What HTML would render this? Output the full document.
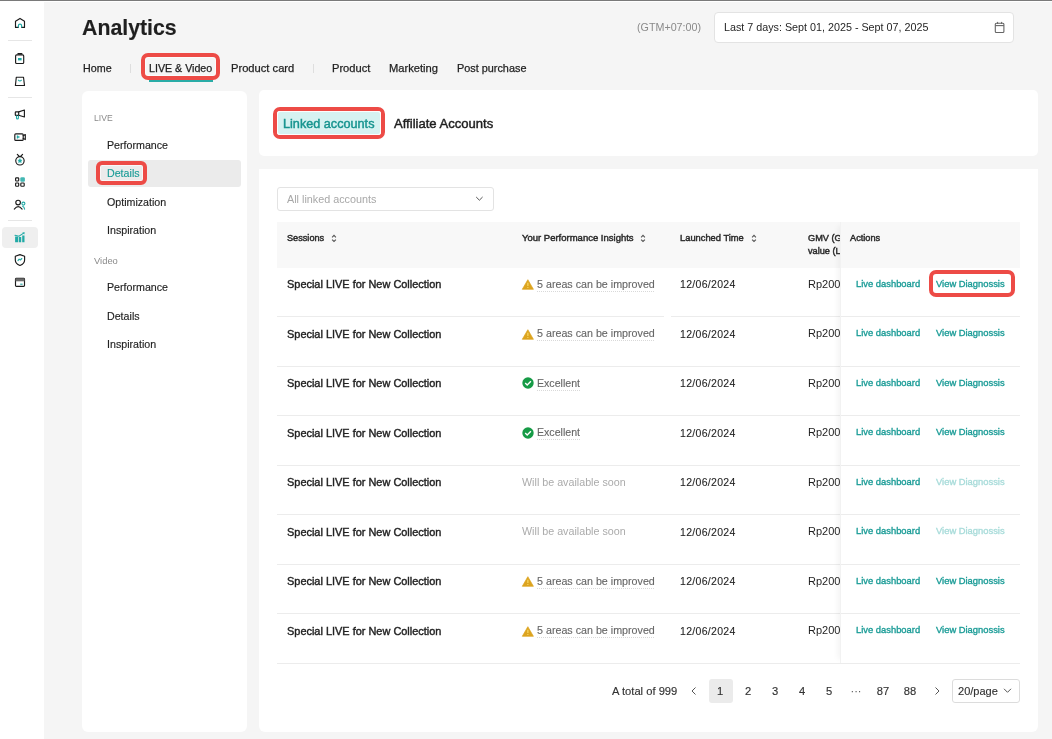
<!DOCTYPE html>
<html><head><meta charset="utf-8"><title>Analytics</title>
<style>
html,body{margin:0;padding:0}
body{width:1052px;height:739px;overflow:hidden;background:#f5f5f5;position:relative;font-family:"Liberation Sans",sans-serif;-webkit-font-smoothing:antialiased}
.t{will-change:transform}
.t{position:absolute;white-space:nowrap}
.r{position:absolute;box-sizing:content-box}
.ic{position:absolute;overflow:visible}
.clip{position:absolute;overflow:hidden}
</style></head><body>
<div class="r" style="left:0px;top:0px;width:1052px;height:1px;background:#7a7a7a"></div>
<div class="r" style="left:0px;top:1px;width:44px;height:738px;background:#fff"></div>
<div class="r" style="left:44px;top:1px;width:1008px;height:1px;background:#fff"></div>
<div class="r" style="left:8px;top:40px;width:24px;height:1px;background:#e6e6e6"></div>
<div class="r" style="left:8px;top:97px;width:24px;height:1px;background:#e6e6e6"></div>
<div class="r" style="left:8px;top:220px;width:24px;height:1px;background:#e6e6e6"></div>
<div class="r" style="left:2px;top:227px;width:36px;height:21px;background:#efefef;border-radius:4px"></div>
<svg class="ic" style="left:10px;top:14px" width="20" height="20" viewBox="0 0 20 20"><path d="M5.5 13.4V7.3L10 4.4L14.5 7.3V13.4H11.6M8.3 13.4H5.5" fill="none" stroke="#1c1c1c" stroke-width="1.15" stroke-linejoin="round" stroke-linecap="round"/><path d="M8.4 13.6V11.8A1.6 1.6 0 0 1 11.6 11.8V13.6" fill="none" stroke="#22aaa6" stroke-width="1.2"/></svg>
<svg class="ic" style="left:10px;top:49px" width="20" height="20" viewBox="0 0 20 20"><rect x="5.6" y="5.9" width="8.1" height="8.6" rx="1" fill="none" stroke="#1c1c1c" stroke-width="1.15" stroke-linejoin="round" stroke-linecap="round"/><path d="M8.1 4.8H11.7" stroke="#1c1c1c" stroke-width="1.6" stroke-linecap="round"/><rect x="8" y="9" width="3.6" height="2.4" fill="#22aaa6"/></svg>
<svg class="ic" style="left:10px;top:72px" width="20" height="20" viewBox="0 0 20 20"><path d="M6.3 5.2H13.5L14.5 13.5H5.4Z" fill="none" stroke="#1c1c1c" stroke-width="1.15" stroke-linejoin="round" stroke-linecap="round"/><path d="M8.2 7.9Q9.9 10.2 11.6 7.9" fill="none" stroke="#22aaa6" stroke-width="1.1"/></svg>
<svg class="ic" style="left:10px;top:105px" width="20" height="20" viewBox="0 0 20 20"><rect x="5.3" y="6.8" width="3.4" height="3.6" rx="0.6" fill="none" stroke="#1c1c1c" stroke-width="1.15" stroke-linejoin="round" stroke-linecap="round"/><path d="M8.7 6.9L14.4 5V12L8.7 10.3" fill="none" stroke="#1c1c1c" stroke-width="1.15" stroke-linejoin="round" stroke-linecap="round"/><path d="M6.5 10.6V12.9A0.95 0.95 0 0 0 8.4 12.9V10.6" fill="none" stroke="#22aaa6" stroke-width="1.1"/></svg>
<svg class="ic" style="left:10px;top:127px" width="20" height="20" viewBox="0 0 20 20"><rect x="4.8" y="6.8" width="8.4" height="6.6" rx="1" fill="none" stroke="#1c1c1c" stroke-width="1.15" stroke-linejoin="round" stroke-linecap="round"/><path d="M13.2 8.6L15.3 7.6V12.6L13.2 11.6" fill="none" stroke="#1c1c1c" stroke-width="1.15" stroke-linejoin="round" stroke-linecap="round"/><path d="M7 8.5V11.5L9.7 10Z" fill="#22aaa6" stroke="#22aaa6" stroke-width="0.4" stroke-linejoin="round"/></svg>
<svg class="ic" style="left:10px;top:150px" width="20" height="20" viewBox="0 0 20 20"><circle cx="9.95" cy="10.8" r="4.2" fill="none" stroke="#1c1c1c" stroke-width="1.15" stroke-linejoin="round" stroke-linecap="round"/><path d="M7.3 4.3L9.4 6.5M12.6 4.3L10.5 6.5" fill="none" stroke="#1c1c1c" stroke-width="1.15" stroke-linejoin="round" stroke-linecap="round"/><path d="M9.95 8.6L10.6 10L12.1 10.1L11 11.1L11.3 12.6L9.95 11.9L8.6 12.6L8.9 11.1L7.8 10.1L9.3 10Z" fill="#22aaa6" stroke="#22aaa6" stroke-width="0.5" stroke-linejoin="round"/></svg>
<svg class="ic" style="left:10px;top:172px" width="20" height="20" viewBox="0 0 20 20"><rect x="5.6" y="5.8" width="3.1" height="3.2" rx="0.8" fill="none" stroke="#1c1c1c" stroke-width="1.15" stroke-linejoin="round" stroke-linecap="round"/><rect x="5.6" y="11" width="3.1" height="3.2" rx="0.8" fill="none" stroke="#1c1c1c" stroke-width="1.15" stroke-linejoin="round" stroke-linecap="round"/><rect x="10.8" y="11" width="3.4" height="3.2" rx="0.8" fill="none" stroke="#1c1c1c" stroke-width="1.15" stroke-linejoin="round" stroke-linecap="round"/><rect x="10.3" y="5.3" width="4.6" height="4.4" rx="1.3" fill="#22aaa6" opacity="0.85"/></svg>
<svg class="ic" style="left:10px;top:195px" width="20" height="20" viewBox="0 0 20 20"><circle cx="8.1" cy="7.5" r="2.3" fill="none" stroke="#1c1c1c" stroke-width="1.15" stroke-linejoin="round" stroke-linecap="round"/><path d="M4.3 14.1Q8.2 9.2 12.1 14.1" fill="none" stroke="#1c1c1c" stroke-width="1.15" stroke-linejoin="round" stroke-linecap="round"/><circle cx="13.4" cy="8.6" r="1.5" fill="none" stroke="#22aaa6" stroke-width="1.1"/><path d="M12.6 11.2Q14.1 11.6 14.6 14.2" fill="none" stroke="#22aaa6" stroke-width="1.1" stroke-linecap="round"/></svg>
<svg class="ic" style="left:10px;top:227px" width="20" height="20" viewBox="0 0 20 20"><path d="M5.1 15.3H8.1V9.4H5.1ZM8.8 15.3H11.2V10H8.8ZM12.2 15.3H14.5V8.6H12.2Z" fill="#22aaa6"/><path d="M5 8.3L9 9.2L14 5.9" fill="none" stroke="#22aaa6" stroke-width="1.1" stroke-linecap="round"/><path d="M12.2 5.6L14.5 5.5L14.3 7.6Z" fill="#22aaa6"/></svg>
<svg class="ic" style="left:10px;top:250px" width="20" height="20" viewBox="0 0 20 20"><path d="M9.95 4.6L14.6 6.2V10Q14.6 13.8 9.95 15.5Q5.3 13.8 5.3 10V6.2Z" fill="none" stroke="#1c1c1c" stroke-width="1.15" stroke-linejoin="round" stroke-linecap="round"/><path d="M8 10.6L9.1 9.1L10.4 10L11.8 8.5" fill="none" stroke="#22aaa6" stroke-width="1.1" stroke-linecap="round" stroke-linejoin="round"/></svg>
<svg class="ic" style="left:10px;top:272px" width="20" height="20" viewBox="0 0 20 20"><rect x="5.5" y="6.3" width="9" height="8.1" rx="0.9" fill="none" stroke="#1c1c1c" stroke-width="1.15" stroke-linejoin="round" stroke-linecap="round"/><rect x="5.5" y="6.3" width="9" height="3" fill="#6a6a6a"/><path d="M10.2 12.2H12.6" stroke="#22aaa6" stroke-width="1.1"/></svg>
<div class="t" style="left:82.20px;top:18.17px;font-size:21.3px;line-height:21.3px;color:#1f1f1f;font-weight:700;-webkit-text-stroke:0.15px #1f1f1f;">Analytics</div>
<div class="t" style="left:637.20px;top:22.13px;font-size:10.72px;line-height:10.72px;color:#8a8a8a;font-weight:400;">(GTM+07:00)</div>
<div class="r" style="left:714px;top:12px;width:298px;height:29px;background:#fff;border:1px solid #e3e3e3;border-radius:4px"></div>
<div class="t" style="left:723.50px;top:22.10px;font-size:10.75px;line-height:10.75px;color:#262626;font-weight:400;">Last 7 days: Sept 01, 2025 - Sept 07, 2025</div>
<svg class="ic" style="left:993px;top:21px" width="13" height="13" viewBox="0 0 13 13"><rect x="2.3" y="2.3" width="8.6" height="9.2" rx="1" fill="none" stroke="#666" stroke-width="1.1"/><path d="M2.3 4.6H10.9" stroke="#666" stroke-width="1.1"/><path d="M4.6 0.9V3M8.6 0.9V3" stroke="#666" stroke-width="1"/></svg>
<div class="t" style="left:82.60px;top:62.93px;font-size:10.72px;line-height:10.72px;color:#1f1f1f;font-weight:400;-webkit-text-stroke:0.25px #1f1f1f;">Home</div>
<div class="r" style="left:130px;top:64px;width:1px;height:9px;background:#dedede"></div>
<div class="t" style="left:149.00px;top:62.97px;font-size:10.67px;line-height:10.67px;color:#1f1f1f;font-weight:400;-webkit-text-stroke:0.25px #1f1f1f;">LIVE &amp; Video</div>
<div class="r" style="left:149px;top:80px;width:64px;height:2px;background:#2aaca7"></div>
<div class="r" style="left:141px;top:53px;width:71px;height:19px;border:4px solid #ed4b46;border-radius:7px;box-shadow:inset 0 0 0 1px rgba(255,255,255,0.6)"></div>
<div class="t" style="left:231.00px;top:62.54px;font-size:11.17px;line-height:11.17px;color:#1f1f1f;font-weight:400;-webkit-text-stroke:0.25px #1f1f1f;">Product card</div>
<div class="r" style="left:313px;top:64px;width:1px;height:9px;background:#dedede"></div>
<div class="t" style="left:331.70px;top:62.60px;font-size:11.11px;line-height:11.11px;color:#1f1f1f;font-weight:400;-webkit-text-stroke:0.25px #1f1f1f;">Product</div>
<div class="t" style="left:388.80px;top:62.55px;font-size:11.16px;line-height:11.16px;color:#1f1f1f;font-weight:400;-webkit-text-stroke:0.25px #1f1f1f;">Marketing</div>
<div class="t" style="left:457.00px;top:62.80px;font-size:10.87px;line-height:10.87px;color:#1f1f1f;font-weight:400;-webkit-text-stroke:0.25px #1f1f1f;">Post purchase</div>
<div class="r" style="left:82px;top:90.5px;width:165px;height:641px;background:#fff;border-radius:6px"></div>
<div class="t" style="left:93.60px;top:114.32px;font-size:8.6px;line-height:8.6px;color:#8a8a8a;font-weight:400;">LIVE</div>
<div class="r" style="left:88px;top:159.5px;width:153px;height:27px;background:#ebebeb;border-radius:3px"></div>
<div class="r" style="left:96px;top:161px;width:43px;height:16px;border:4px solid #ed4b46;border-radius:6px;box-shadow:inset 0 0 0 1px rgba(255,255,255,0.6)"></div>
<div class="t" style="left:106.50px;top:139.67px;font-size:10.67px;line-height:10.67px;color:#1f1f1f;font-weight:400;-webkit-text-stroke:0.15px #1f1f1f;">Performance</div>
<div class="t" style="left:106.50px;top:167.97px;font-size:10.67px;line-height:10.67px;color:#1b9c97;font-weight:400;-webkit-text-stroke:0.15px #1b9c97;">Details</div>
<div class="t" style="left:106.50px;top:196.97px;font-size:10.67px;line-height:10.67px;color:#1f1f1f;font-weight:400;-webkit-text-stroke:0.15px #1f1f1f;">Optimization</div>
<div class="t" style="left:106.50px;top:225.37px;font-size:10.67px;line-height:10.67px;color:#1f1f1f;font-weight:400;-webkit-text-stroke:0.15px #1f1f1f;">Inspiration</div>
<div class="t" style="left:94.40px;top:256.14px;font-size:9.4px;line-height:9.4px;color:#8a8a8a;font-weight:400;">Video</div>
<div class="t" style="left:106.50px;top:282.27px;font-size:10.67px;line-height:10.67px;color:#1f1f1f;font-weight:400;-webkit-text-stroke:0.15px #1f1f1f;">Performance</div>
<div class="t" style="left:106.50px;top:310.97px;font-size:10.67px;line-height:10.67px;color:#1f1f1f;font-weight:400;-webkit-text-stroke:0.15px #1f1f1f;">Details</div>
<div class="t" style="left:106.50px;top:339.37px;font-size:10.67px;line-height:10.67px;color:#1f1f1f;font-weight:400;-webkit-text-stroke:0.15px #1f1f1f;">Inspiration</div>
<div class="r" style="left:259px;top:90px;width:779px;height:66.4px;background:#fff;border-radius:5px"></div>
<div class="r" style="left:273px;top:107px;width:104px;height:24px;border:4px solid #ed4b46;border-radius:7px"></div>
<div class="r" style="left:277px;top:111px;width:104px;height:24px;background:#d6f2f1;border-radius:3px;box-shadow:inset 0 0 0 1px #fdfdfd"></div>
<div class="t" style="left:283.00px;top:117.78px;font-size:12.66px;line-height:12.66px;color:#17948f;font-weight:400;-webkit-text-stroke:0.45px #17948f;">Linked accounts</div>
<div class="t" style="left:394.00px;top:117.44px;font-size:13.07px;line-height:13.07px;color:#1f1f1f;font-weight:400;-webkit-text-stroke:0.45px #1f1f1f;">Affiliate Accounts</div>
<div class="r" style="left:259px;top:169px;width:779px;height:562.5px;background:#fff;border-radius:0 0 6px 6px"></div>
<div class="r" style="left:277px;top:187px;width:215px;height:22px;background:#fff;border:1px solid #e3e3e3;border-radius:3px"></div>
<div class="t" style="left:286.70px;top:193.66px;font-size:10.8px;line-height:10.8px;color:#a8a8a8;font-weight:400;">All linked accounts</div>
<svg class="ic" style="left:474px;top:194px" width="10" height="8" viewBox="0 0 10 8"><path d="M2.2 3L5.4 6.2L8.6 3" fill="none" stroke="#555" stroke-width="1"/></svg>
<div class="r" style="left:277px;top:222px;width:743px;height:46px;background:#f8f8f8"></div>
<div class="t" style="left:286.70px;top:233.75px;font-size:9.16px;line-height:9.16px;color:#2a2a2a;font-weight:400;-webkit-text-stroke:0.45px #2a2a2a;">Sessions</div>
<svg class="ic" style="left:330.5px;top:234px" width="6" height="9" viewBox="0 0 6 9"><path d="M1.1 3.3L3 1.4L4.9 3.3M1.1 5.6L3 7.5L4.9 5.6" fill="none" stroke="#555" stroke-width="1.15"/></svg>
<div class="t" style="left:522.00px;top:233.46px;font-size:9.5px;line-height:9.5px;color:#2a2a2a;font-weight:400;-webkit-text-stroke:0.45px #2a2a2a;">Your Performance Insights</div>
<svg class="ic" style="left:640px;top:234px" width="6" height="9" viewBox="0 0 6 9"><path d="M1.1 3.3L3 1.4L4.9 3.3M1.1 5.6L3 7.5L4.9 5.6" fill="none" stroke="#555" stroke-width="1.15"/></svg>
<div class="t" style="left:680.30px;top:233.59px;font-size:9.34px;line-height:9.34px;color:#2a2a2a;font-weight:400;-webkit-text-stroke:0.45px #2a2a2a;">Launched Time</div>
<svg class="ic" style="left:750.5px;top:234px" width="6" height="9" viewBox="0 0 6 9"><path d="M1.1 3.3L3 1.4L4.9 3.3M1.1 5.6L3 7.5L4.9 5.6" fill="none" stroke="#555" stroke-width="1.15"/></svg>
<div class="r" style="left:277px;top:316px;width:743px;height:1px;background:#ececec"></div>
<div class="r" style="left:664px;top:316px;width:7px;height:1px;background:#fff"></div>
<div class="t" style="left:286.70px;top:279.34px;font-size:10.94px;line-height:10.94px;color:#1f1f1f;font-weight:400;-webkit-text-stroke:0.4px #1f1f1f;">Special LIVE for New Collection</div>
<svg class="ic" style="left:522px;top:279.2px" width="12" height="11" viewBox="0 0 12 11"><path d="M5.85 0.7L11.4 10.3H0.3Z" fill="#dca41f" stroke="#dca41f" stroke-width="0.7" stroke-linejoin="round"/><path d="M5.85 3.8V6.9" stroke="#f6d35e" stroke-width="1.3"/><path d="M5.85 8.1V9.1" stroke="#f6d35e" stroke-width="1.2"/></svg>
<div class="t" style="left:537.20px;top:278.73px;font-size:10.71px;line-height:10.71px;color:#666;font-weight:400;-webkit-text-stroke:0.12px #666;">5 areas can be improved</div>
<div class="r" style="left:537px;top:291px;width:118px;height:1px;background:linear-gradient(to right,#d9d9d9 50%,transparent 50%);background-size:2px 1px"></div>
<div class="t" style="left:680.30px;top:279.11px;font-size:10.5px;line-height:10.5px;color:#1f1f1f;font-weight:400;-webkit-text-stroke:0.1px #1f1f1f;letter-spacing:0.3px">12/06/2024</div>
<div class="clip" style="left:807px;top:267.0px;width:33px;height:48px"><div class="t" style="left:0.70px;top:11.89px;font-size:11px;line-height:11px;color:#1f1f1f;font-weight:400;">Rp200,000</div>
</div>
<div class="r" style="left:277px;top:366px;width:743px;height:1px;background:#ececec"></div>
<div class="t" style="left:286.70px;top:328.84px;font-size:10.94px;line-height:10.94px;color:#1f1f1f;font-weight:400;-webkit-text-stroke:0.4px #1f1f1f;">Special LIVE for New Collection</div>
<svg class="ic" style="left:522px;top:328.7px" width="12" height="11" viewBox="0 0 12 11"><path d="M5.85 0.7L11.4 10.3H0.3Z" fill="#dca41f" stroke="#dca41f" stroke-width="0.7" stroke-linejoin="round"/><path d="M5.85 3.8V6.9" stroke="#f6d35e" stroke-width="1.3"/><path d="M5.85 8.1V9.1" stroke="#f6d35e" stroke-width="1.2"/></svg>
<div class="t" style="left:537.20px;top:328.23px;font-size:10.71px;line-height:10.71px;color:#666;font-weight:400;-webkit-text-stroke:0.12px #666;">5 areas can be improved</div>
<div class="r" style="left:537px;top:340px;width:118px;height:1px;background:linear-gradient(to right,#d9d9d9 50%,transparent 50%);background-size:2px 1px"></div>
<div class="t" style="left:680.30px;top:328.61px;font-size:10.5px;line-height:10.5px;color:#1f1f1f;font-weight:400;-webkit-text-stroke:0.1px #1f1f1f;letter-spacing:0.3px">12/06/2024</div>
<div class="clip" style="left:807px;top:316.5px;width:33px;height:48px"><div class="t" style="left:0.70px;top:11.89px;font-size:11px;line-height:11px;color:#1f1f1f;font-weight:400;">Rp200,000</div>
</div>
<div class="r" style="left:277px;top:415px;width:743px;height:1px;background:#ececec"></div>
<div class="t" style="left:286.70px;top:378.34px;font-size:10.94px;line-height:10.94px;color:#1f1f1f;font-weight:400;-webkit-text-stroke:0.4px #1f1f1f;">Special LIVE for New Collection</div>
<svg class="ic" style="left:522px;top:377.1px" width="12" height="12" viewBox="0 0 12 12"><circle cx="6" cy="6" r="5.7" fill="#169b46"/><path d="M3.2 6.1L5.2 8L8.9 4.2" fill="none" stroke="#fff" stroke-width="1.4"/></svg>
<div class="t" style="left:537.20px;top:377.83px;font-size:10.6px;line-height:10.6px;color:#666;font-weight:400;-webkit-text-stroke:0.12px #666;">Excellent</div>
<div class="r" style="left:537px;top:390px;width:43px;height:1px;background:linear-gradient(to right,#d9d9d9 50%,transparent 50%);background-size:2px 1px"></div>
<div class="t" style="left:680.30px;top:378.11px;font-size:10.5px;line-height:10.5px;color:#1f1f1f;font-weight:400;-webkit-text-stroke:0.1px #1f1f1f;letter-spacing:0.3px">12/06/2024</div>
<div class="clip" style="left:807px;top:366.0px;width:33px;height:48px"><div class="t" style="left:0.70px;top:11.89px;font-size:11px;line-height:11px;color:#1f1f1f;font-weight:400;">Rp200,000</div>
</div>
<div class="r" style="left:277px;top:465px;width:743px;height:1px;background:#ececec"></div>
<div class="t" style="left:286.70px;top:427.84px;font-size:10.94px;line-height:10.94px;color:#1f1f1f;font-weight:400;-webkit-text-stroke:0.4px #1f1f1f;">Special LIVE for New Collection</div>
<svg class="ic" style="left:522px;top:426.6px" width="12" height="12" viewBox="0 0 12 12"><circle cx="6" cy="6" r="5.7" fill="#169b46"/><path d="M3.2 6.1L5.2 8L8.9 4.2" fill="none" stroke="#fff" stroke-width="1.4"/></svg>
<div class="t" style="left:537.20px;top:427.33px;font-size:10.6px;line-height:10.6px;color:#666;font-weight:400;-webkit-text-stroke:0.12px #666;">Excellent</div>
<div class="r" style="left:537px;top:439px;width:43px;height:1px;background:linear-gradient(to right,#d9d9d9 50%,transparent 50%);background-size:2px 1px"></div>
<div class="t" style="left:680.30px;top:427.61px;font-size:10.5px;line-height:10.5px;color:#1f1f1f;font-weight:400;-webkit-text-stroke:0.1px #1f1f1f;letter-spacing:0.3px">12/06/2024</div>
<div class="clip" style="left:807px;top:415.5px;width:33px;height:48px"><div class="t" style="left:0.70px;top:11.89px;font-size:11px;line-height:11px;color:#1f1f1f;font-weight:400;">Rp200,000</div>
</div>
<div class="r" style="left:277px;top:514px;width:743px;height:1px;background:#ececec"></div>
<div class="t" style="left:286.70px;top:477.34px;font-size:10.94px;line-height:10.94px;color:#1f1f1f;font-weight:400;-webkit-text-stroke:0.4px #1f1f1f;">Special LIVE for New Collection</div>
<div class="t" style="left:522.40px;top:476.92px;font-size:10.73px;line-height:10.73px;color:#ababab;font-weight:400;">Will be available soon</div>
<div class="t" style="left:680.30px;top:477.11px;font-size:10.5px;line-height:10.5px;color:#1f1f1f;font-weight:400;-webkit-text-stroke:0.1px #1f1f1f;letter-spacing:0.3px">12/06/2024</div>
<div class="clip" style="left:807px;top:465.0px;width:33px;height:48px"><div class="t" style="left:0.70px;top:11.89px;font-size:11px;line-height:11px;color:#1f1f1f;font-weight:400;">Rp200,000</div>
</div>
<div class="r" style="left:277px;top:564px;width:743px;height:1px;background:#ececec"></div>
<div class="t" style="left:286.70px;top:526.84px;font-size:10.94px;line-height:10.94px;color:#1f1f1f;font-weight:400;-webkit-text-stroke:0.4px #1f1f1f;">Special LIVE for New Collection</div>
<div class="t" style="left:522.40px;top:526.42px;font-size:10.73px;line-height:10.73px;color:#ababab;font-weight:400;">Will be available soon</div>
<div class="t" style="left:680.30px;top:526.61px;font-size:10.5px;line-height:10.5px;color:#1f1f1f;font-weight:400;-webkit-text-stroke:0.1px #1f1f1f;letter-spacing:0.3px">12/06/2024</div>
<div class="clip" style="left:807px;top:514.5px;width:33px;height:48px"><div class="t" style="left:0.70px;top:11.89px;font-size:11px;line-height:11px;color:#1f1f1f;font-weight:400;">Rp200,000</div>
</div>
<div class="r" style="left:277px;top:613px;width:743px;height:1px;background:#ececec"></div>
<div class="t" style="left:286.70px;top:576.34px;font-size:10.94px;line-height:10.94px;color:#1f1f1f;font-weight:400;-webkit-text-stroke:0.4px #1f1f1f;">Special LIVE for New Collection</div>
<svg class="ic" style="left:522px;top:576.2px" width="12" height="11" viewBox="0 0 12 11"><path d="M5.85 0.7L11.4 10.3H0.3Z" fill="#dca41f" stroke="#dca41f" stroke-width="0.7" stroke-linejoin="round"/><path d="M5.85 3.8V6.9" stroke="#f6d35e" stroke-width="1.3"/><path d="M5.85 8.1V9.1" stroke="#f6d35e" stroke-width="1.2"/></svg>
<div class="t" style="left:537.20px;top:575.73px;font-size:10.71px;line-height:10.71px;color:#666;font-weight:400;-webkit-text-stroke:0.12px #666;">5 areas can be improved</div>
<div class="r" style="left:537px;top:588px;width:118px;height:1px;background:linear-gradient(to right,#d9d9d9 50%,transparent 50%);background-size:2px 1px"></div>
<div class="t" style="left:680.30px;top:576.11px;font-size:10.5px;line-height:10.5px;color:#1f1f1f;font-weight:400;-webkit-text-stroke:0.1px #1f1f1f;letter-spacing:0.3px">12/06/2024</div>
<div class="clip" style="left:807px;top:564.0px;width:33px;height:48px"><div class="t" style="left:0.70px;top:11.89px;font-size:11px;line-height:11px;color:#1f1f1f;font-weight:400;">Rp200,000</div>
</div>
<div class="r" style="left:277px;top:663px;width:743px;height:1px;background:#ececec"></div>
<div class="t" style="left:286.70px;top:625.84px;font-size:10.94px;line-height:10.94px;color:#1f1f1f;font-weight:400;-webkit-text-stroke:0.4px #1f1f1f;">Special LIVE for New Collection</div>
<svg class="ic" style="left:522px;top:625.7px" width="12" height="11" viewBox="0 0 12 11"><path d="M5.85 0.7L11.4 10.3H0.3Z" fill="#dca41f" stroke="#dca41f" stroke-width="0.7" stroke-linejoin="round"/><path d="M5.85 3.8V6.9" stroke="#f6d35e" stroke-width="1.3"/><path d="M5.85 8.1V9.1" stroke="#f6d35e" stroke-width="1.2"/></svg>
<div class="t" style="left:537.20px;top:625.23px;font-size:10.71px;line-height:10.71px;color:#666;font-weight:400;-webkit-text-stroke:0.12px #666;">5 areas can be improved</div>
<div class="r" style="left:537px;top:637px;width:118px;height:1px;background:linear-gradient(to right,#d9d9d9 50%,transparent 50%);background-size:2px 1px"></div>
<div class="t" style="left:680.30px;top:625.61px;font-size:10.5px;line-height:10.5px;color:#1f1f1f;font-weight:400;-webkit-text-stroke:0.1px #1f1f1f;letter-spacing:0.3px">12/06/2024</div>
<div class="clip" style="left:807px;top:613.5px;width:33px;height:48px"><div class="t" style="left:0.70px;top:11.89px;font-size:11px;line-height:11px;color:#1f1f1f;font-weight:400;">Rp200,000</div>
</div>
<div class="clip" style="left:807px;top:222px;width:33px;height:44px"><div class="t" style="left:0.70px;top:11.71px;font-size:9.2px;line-height:9.2px;color:#2a2a2a;font-weight:400;-webkit-text-stroke:0.45px #2a2a2a;">GMV (Gross merchandise</div>
<div class="t" style="left:0.70px;top:25.01px;font-size:9.2px;line-height:9.2px;color:#2a2a2a;font-weight:400;-webkit-text-stroke:0.45px #2a2a2a;">value (LIVE)</div>
</div>
<div class="r" style="left:840px;top:222px;width:180px;height:441px;background:transparent;box-shadow:-6px 0 6px -4px rgba(0,0,0,0.05);border-left:1px solid #f2f2f2"></div>
<div class="r" style="left:841px;top:222px;width:179px;height:46px;background:#f8f8f8"></div>
<div class="t" style="left:849.70px;top:233.71px;font-size:9.2px;line-height:9.2px;color:#2a2a2a;font-weight:400;-webkit-text-stroke:0.45px #2a2a2a;">Actions</div>
<div class="t" style="left:855.90px;top:279.86px;font-size:9.38px;line-height:9.38px;color:#1b9c97;font-weight:400;-webkit-text-stroke:0.35px #1b9c97;">Live dashboard</div>
<div class="t" style="left:935.70px;top:279.86px;font-size:9.38px;line-height:9.38px;color:#1b9c97;font-weight:400;-webkit-text-stroke:0.35px #1b9c97;">View Diagnossis</div>
<div class="t" style="left:855.90px;top:329.36px;font-size:9.38px;line-height:9.38px;color:#1b9c97;font-weight:400;-webkit-text-stroke:0.35px #1b9c97;">Live dashboard</div>
<div class="t" style="left:935.70px;top:329.36px;font-size:9.38px;line-height:9.38px;color:#1b9c97;font-weight:400;-webkit-text-stroke:0.35px #1b9c97;">View Diagnossis</div>
<div class="t" style="left:855.90px;top:378.86px;font-size:9.38px;line-height:9.38px;color:#1b9c97;font-weight:400;-webkit-text-stroke:0.35px #1b9c97;">Live dashboard</div>
<div class="t" style="left:935.70px;top:378.86px;font-size:9.38px;line-height:9.38px;color:#1b9c97;font-weight:400;-webkit-text-stroke:0.35px #1b9c97;">View Diagnossis</div>
<div class="t" style="left:855.90px;top:428.36px;font-size:9.38px;line-height:9.38px;color:#1b9c97;font-weight:400;-webkit-text-stroke:0.35px #1b9c97;">Live dashboard</div>
<div class="t" style="left:935.70px;top:428.36px;font-size:9.38px;line-height:9.38px;color:#1b9c97;font-weight:400;-webkit-text-stroke:0.35px #1b9c97;">View Diagnossis</div>
<div class="t" style="left:855.90px;top:477.86px;font-size:9.38px;line-height:9.38px;color:#1b9c97;font-weight:400;-webkit-text-stroke:0.35px #1b9c97;">Live dashboard</div>
<div class="t" style="left:935.70px;top:477.86px;font-size:9.38px;line-height:9.38px;color:#a9dcda;font-weight:400;-webkit-text-stroke:0.35px #a9dcda;">View Diagnossis</div>
<div class="t" style="left:855.90px;top:527.36px;font-size:9.38px;line-height:9.38px;color:#1b9c97;font-weight:400;-webkit-text-stroke:0.35px #1b9c97;">Live dashboard</div>
<div class="t" style="left:935.70px;top:527.36px;font-size:9.38px;line-height:9.38px;color:#a9dcda;font-weight:400;-webkit-text-stroke:0.35px #a9dcda;">View Diagnossis</div>
<div class="t" style="left:855.90px;top:576.86px;font-size:9.38px;line-height:9.38px;color:#1b9c97;font-weight:400;-webkit-text-stroke:0.35px #1b9c97;">Live dashboard</div>
<div class="t" style="left:935.70px;top:576.86px;font-size:9.38px;line-height:9.38px;color:#1b9c97;font-weight:400;-webkit-text-stroke:0.35px #1b9c97;">View Diagnossis</div>
<div class="t" style="left:855.90px;top:626.36px;font-size:9.38px;line-height:9.38px;color:#1b9c97;font-weight:400;-webkit-text-stroke:0.35px #1b9c97;">Live dashboard</div>
<div class="t" style="left:935.70px;top:626.36px;font-size:9.38px;line-height:9.38px;color:#1b9c97;font-weight:400;-webkit-text-stroke:0.35px #1b9c97;">View Diagnossis</div>
<div class="r" style="left:929px;top:270px;width:78px;height:19px;border:4px solid #ed4b46;border-radius:7px"></div>
<div class="t" style="left:612.40px;top:685.92px;font-size:11.2px;line-height:11.2px;color:#333;font-weight:400;-webkit-text-stroke:0.15px #333;">A total of 999</div>
<svg class="ic" style="left:690px;top:686px" width="8" height="10" viewBox="0 0 8 10"><path d="M5.5 1.5L2 5L5.5 8.5" fill="none" stroke="#555" stroke-width="1"/></svg>
<div class="r" style="left:709px;top:679px;width:24px;height:24px;background:#ebebeb;border-radius:3px"></div>
<div class="t" style="left:705.3px;top:686.0885px;width:30px;text-align:center;font-size:11.2px;line-height:11px;color:#333;-webkit-text-stroke:0.15px #333">1</div>
<div class="t" style="left:733px;top:686.0885px;width:30px;text-align:center;font-size:11.2px;line-height:11px;color:#333;-webkit-text-stroke:0.15px #333">2</div>
<div class="t" style="left:759.9px;top:686.0885px;width:30px;text-align:center;font-size:11.2px;line-height:11px;color:#333;-webkit-text-stroke:0.15px #333">3</div>
<div class="t" style="left:786.8px;top:686.0885px;width:30px;text-align:center;font-size:11.2px;line-height:11px;color:#333;-webkit-text-stroke:0.15px #333">4</div>
<div class="t" style="left:814px;top:686.0885px;width:30px;text-align:center;font-size:11.2px;line-height:11px;color:#333;-webkit-text-stroke:0.15px #333">5</div>
<div class="t" style="left:868.1px;top:686.0885px;width:30px;text-align:center;font-size:11.2px;line-height:11px;color:#333;-webkit-text-stroke:0.15px #333">87</div>
<div class="t" style="left:895px;top:686.0885px;width:30px;text-align:center;font-size:11.2px;line-height:11px;color:#333;-webkit-text-stroke:0.15px #333">88</div>
<div class="t" style="left:841px;top:686.0885px;width:30px;text-align:center;font-size:11px;line-height:11px;color:#555">···</div>
<svg class="ic" style="left:933px;top:686px" width="8" height="10" viewBox="0 0 8 10"><path d="M2.5 1.5L6 5L2.5 8.5" fill="none" stroke="#555" stroke-width="1"/></svg>
<div class="r" style="left:952px;top:679px;width:66px;height:22px;background:#fff;border:1px solid #dcdcdc;border-radius:3px"></div>
<div class="t" style="left:958.30px;top:686.05px;font-size:11.04px;line-height:11.04px;color:#333;font-weight:400;-webkit-text-stroke:0.15px #333;">20/page</div>
<svg class="ic" style="left:1003px;top:687px" width="9" height="7" viewBox="0 0 9 7"><path d="M1 1.8L4.5 5.3L8 1.8" fill="none" stroke="#555" stroke-width="1"/></svg>
</body></html>
